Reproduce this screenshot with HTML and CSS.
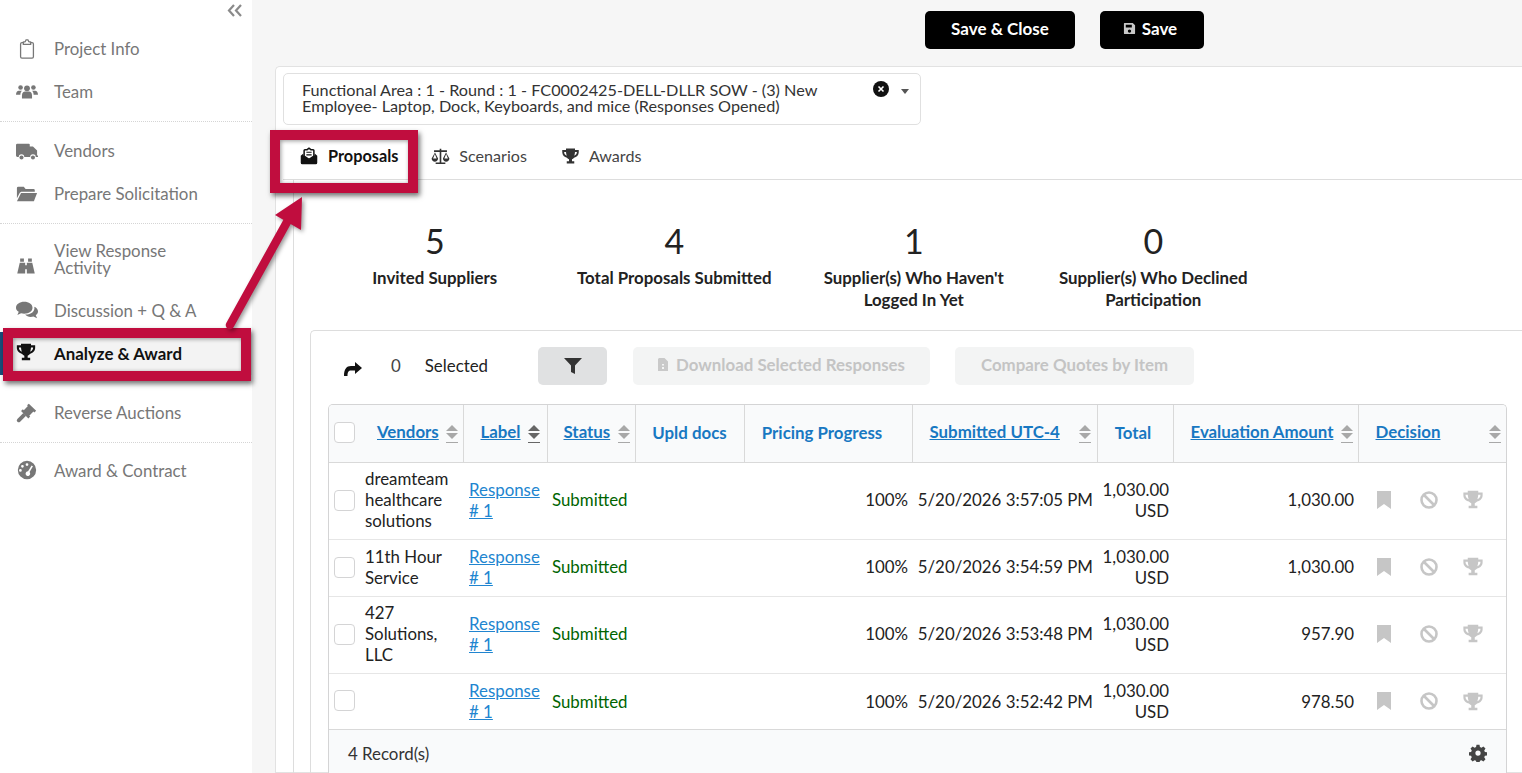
FILE: index.html
```html
<!DOCTYPE html>
<html lang="en">
<head>
<meta charset="utf-8">
<title>Analyze &amp; Award</title>
<link rel="stylesheet" href="styles.css">
</head>
<body>
<div class="page">
  <aside class="sidebar">
    <div class="collapse">
      <svg width="16" height="13" viewBox="0 0 16 13"><path d="M7 1 2 6.500 7 12M14 1 9 6.500 14 12" fill="none" stroke="#8a8a8a" stroke-width="2.200"/></svg>
    </div>
    <nav>
      <div class="nav-group">
        <a class="nav-item"><svg class="nav-icon" viewBox="0 0 24 24"><path d="M8 5h-1.500a1.500 1.500 0 0 0-1.500 1.500v14a1.500 1.500 0 0 0 1.500 1.500h11a1.500 1.500 0 0 0 1.500-1.500v-14a1.500 1.500 0 0 0-1.500-1.500H16M8 7V4.500L10 4l1-2h2l1 2 2 .5V7z" fill="none" stroke="#777" stroke-width="1.400"/></svg><span>Project Info</span></a>
        <a class="nav-item"><svg class="nav-icon" viewBox="0 0 24 24"><circle cx="5" cy="7" r="2.500"/><circle cx="19" cy="7" r="2.500"/><circle cx="12" cy="8" r="3.200"/><path d="M0 15c0-3 1.500-4.500 3-4.500h3.500C5 12 4.800 13.500 4.800 15zM24 15c0-3-1.500-4.500-3-4.500h-3.500c1.500 1.500 1.700 3 1.700 4.500zM6.500 19v-3c0-3 1.500-4.500 3.500-4.500h4c2 0 3.500 1.500 3.500 4.500v3z"/></svg><span>Team</span></a>
      </div>
      <div class="nav-group">
        <a class="nav-item"><svg class="nav-icon" viewBox="0 0 24 24"><path d="M1.500 4h12.500a1 1 0 0 1 1 1v2h3.500l4.500 4.500V17h1v1.500h-2.500a3 3 0 0 0-6 0H9a3 3 0 0 0-6 0H1.500A1.500 1.500 0 0 1 0 17V5.500A1.500 1.500 0 0 1 1.500 4z"/><circle cx="6" cy="19" r="2.200"/><circle cx="18.500" cy="19" r="2.200"/></svg><span>Vendors</span></a>
        <a class="nav-item"><svg class="nav-icon" viewBox="0 0 24 24"><path d="M1 5.500A1.500 1.500 0 0 1 2.500 4h6l2 2.500H19A1.500 1.500 0 0 1 20.500 8v1.500H6.500c-1.200 0-2 .6-2.500 1.500L1 16.500z"/><path d="M5.500 11H23l-3.500 9H1z"/></svg><span>Prepare Solicitation</span></a>
      </div>
      <div class="nav-group">
        <a class="nav-item nav-wrap"><svg class="nav-icon nav-icon-low" viewBox="0 0 24 24"><path d="M5 3h4.500v4H5zM14.500 3H19v4h-4.500zM4.500 8h6.500v3h2V8h6.500l3 13H13v-5h-2v5H1.500z"/></svg><span>View Response<br>Activity</span></a>
        <a class="nav-item"><svg class="nav-icon" viewBox="0 0 24 24"><path d="M9 3c5 0 9 2.700 9 6.500S14 16 9 16c-1.200 0-2.400-.2-3.500-.5L1.500 17.500 3 14C1 12.800 0 11.200 0 9.500 0 5.700 4 3 9 3z"/><path d="M20 8.500c2.500 1 4 2.900 4 5 0 1.600-.9 3-2.500 4L23 21l-4-1.800c-1 .3-2 .3-3 .3-2.500 0-4.700-.9-6-2.500 6 .3 11-3 10-8.500z"/></svg><span>Discussion + Q &amp; A</span></a>
        <a class="nav-item nav-active"><svg class="nav-icon" viewBox="0 0 24 24"><path d="M6 2h12v2h5v3c0 4-3 6.500-6.300 7.300-.8 1-1.700 1.700-2.700 2.100V19h3v3H7v-3h3v-2.600c-1-.4-1.900-1.100-2.700-2.100C4 13.500 1 11 1 7V4h5zM3.500 6.500V7c0 2 1.300 3.700 3.500 4.600-.5-1.500-.9-3.200-1-5.100zm17 0H18c-.1 1.900-.5 3.600-1 5.100 2.200-.9 3.500-2.600 3.500-4.600z"/></svg><span>Analyze &amp; Award</span></a>
        <div class="nav-gap"></div>
        <a class="nav-item"><svg class="nav-icon" viewBox="0 0 24 24"><path d="M14 3l8 7.500-2 2-1-1-4.500 4.500 1 1-2 2-8-8 2-2 1 1L13 5.500l-1-1z"/><path d="M8 13l3 3-6.500 6.500a1.500 1.500 0 0 1-3-3z"/></svg><span>Reverse Auctions</span></a>
      </div>
      <div class="nav-group nav-group-last">
        <a class="nav-item"><svg class="nav-icon" viewBox="0 0 24 24"><path fill-rule="evenodd" d="M12 2a10 10 0 1 1 0 20 10 10 0 0 1 0-20zM12 4.500a1.500 1.500 0 1 0 0 3 1.500 1.500 0 0 0 0-3zM7 6.500a1.500 1.500 0 1 0 0 3 1.500 1.500 0 0 0 0-3zM4.800 11a1.500 1.500 0 1 0 0 3 1.500 1.500 0 0 0 0-3zM17 7l-4 6.500a2.500 2.500 0 1 0 1.800.8L18.500 8z"/></svg><span>Award &amp; Contract</span></a>
      </div>
    </nav>
  </aside>

  <main class="main">
    <header class="actions">
      <button class="btn-black btn-wide">Save &amp; Close</button>
      <button class="btn-black btn-save"><svg width="13" height="13" viewBox="0 0 14 14"><path fill="#c8c8c8" fill-rule="evenodd" d="M1.500 1h9L13 3.500V12a1 1 0 0 1-1 1H2a1 1 0 0 1-1-1V1.500zM3 3v3h6.500V3zM7 8a1.800 1.800 0 1 0 0 3.600A1.800 1.800 0 0 0 7 8z"/></svg>Save</button>
    </header>
    <section class="panel">
      <div class="select">
        <div class="select-text">Functional Area : 1 - Round : 1 - FC0002425-DELL-DLLR SOW - (3) New Employee- Laptop, Dock, Keyboards, and mice (Responses Opened)</div>
        <svg class="select-clear" width="16" height="16" viewBox="0 0 16 16"><circle cx="8" cy="8" r="8" fill="#111"/><path d="m5.500 5.500 5 5m0-5-5 5" stroke="#fff" stroke-width="1.600"/></svg>
        <span class="select-caret"></span>
      </div>
      <div class="tabs">
        <a class="tab tab-active"><svg width="18" height="18" viewBox="0 0 24 24"><path d="M1 11.500 4.500 8.500V11L12 16.500 19.500 11V8.500L23 11.500V21a2 2 0 0 1-2 2H3a2 2 0 0 1-2-2z" fill="#111"/><path d="M5.500 12V4.500a1 1 0 0 1 1-1h3L12 1.500l2.500 2h3a1 1 0 0 1 1 1V12L12 16.500z" fill="#fff" stroke="#111" stroke-width="2"/><path d="M8.500 7h7M8.500 10.500h7" stroke="#111" stroke-width="1.500"/></svg><span>Proposals</span></a>
        <a class="tab tab-scale"><svg width="21" height="18" viewBox="0 0 26 22"><path d="M12 2h2v2h7v2h-1.500L24 14c0 2.500-2 4-4 4s-4-1.500-4-4l4-7.500-.5-.5H14v13h5v2H7v-2h5V6H6.500L6 6.500 10 14c0 2.500-2 4-4 4s-4-1.500-4-4L6.500 6H5V4h7zM6 8.500 3.800 14h4.400zm14 0L17.800 14h4.400z" fill="#333"/></svg><span>Scenarios</span></a>
        <a class="tab"><svg width="19" height="18" viewBox="0 0 24 24"><path fill="#333" d="M6 2h12v2h5v3c0 4-3 6.500-6.300 7.300-.8 1-1.700 1.700-2.700 2.100V19h3v3H7v-3h3v-2.600c-1-.4-1.900-1.100-2.700-2.100C4 13.500 1 11 1 7V4h5zM3.500 6.500V7c0 2 1.300 3.700 3.500 4.600-.5-1.500-.9-3.200-1-5.100zm17 0H18c-.1 1.900-.5 3.600-1 5.100 2.200-.9 3.500-2.600 3.500-4.600z"/></svg><span>Awards</span></a>
      </div>
      <div class="content">
        <div class="stats">
          <div class="stat"><div class="stat-num">5</div><div class="stat-label">Invited Suppliers</div></div>
          <div class="stat"><div class="stat-num">4</div><div class="stat-label">Total Proposals Submitted</div></div>
          <div class="stat"><div class="stat-num">1</div><div class="stat-label">Supplier(s) Who Haven't<br>Logged In Yet</div></div>
          <div class="stat"><div class="stat-num">0</div><div class="stat-label">Supplier(s) Who Declined<br>Participation</div></div>
        </div>
        <div class="card">
          <div class="toolbar">
            <svg class="share" width="18" height="14" viewBox="0 0 18 14"><path d="M11 0l7 6-7 6V8.500H7C4.500 8.500 3.500 10 3.500 14H0C0 7 2.500 4 7 4h4z" fill="#111"/></svg>
            <span class="count">0</span>
            <span class="selected">Selected</span>
            <button class="btn-filter"><svg width="18" height="16" viewBox="0 0 18 16"><path d="M0 0h18l-7 7.500V16l-4-2V7.500z" fill="#333"/></svg></button>
            <button class="btn-off btn-dl"><svg width="10" height="13" viewBox="0 0 10 13"><path d="M1 0h5.500L10 3.500V13H0V1zM4 6v1.500h2V6zm0 3v2h2V9z" fill-rule="evenodd" fill="#c9c9c9"/></svg>Download Selected Responses</button>
            <button class="btn-off btn-cmp">Compare Quotes by Item</button>
          </div>
          <div class="table-wrap">
            <table class="grid">
              <colgroup>
                <col class="c1"><col class="c2"><col class="c3"><col class="c4"><col class="c5"><col class="c6"><col class="c7"><col class="c8"><col class="c9">
              </colgroup>
              <thead>
                <tr>
                  <th class="th-split"><span class="check"></span><a class="sortlink">Vendors</a><span class="sort"></span></th>
                  <th class="th-split th-center"><a class="sortlink">Label</a><span class="sort sort-dark"></span></th>
                  <th class="th-split th-center"><a class="sortlink">Status</a><span class="sort"></span></th>
                  <th class="plain th-c">Upld docs</th>
                  <th class="plain th-c th-pricing">Pricing Progress</th>
                  <th class="th-split th-sub"><a class="sortlink">Submitted UTC-4</a><span class="sort"></span></th>
                  <th class="plain th-c th-total">Total</th>
                  <th class="th-split th-center"><a class="sortlink">Evaluation Amount</a><span class="sort"></span></th>
                  <th class="th-split th-dec"><a class="sortlink">Decision</a><span class="sort"></span></th>
                </tr>
              </thead>
              <tbody>
                <tr class="r-76">
                  <td class="td-vendor"><span class="check"></span><span class="vname">dreamteam healthcare solutions</span></td>
                  <td class="td-link"><a>Response # 1</a></td>
                  <td class="ok">Submitted</td><td></td>
                  <td class="num">100%</td>
                  <td class="num td-date">5/20/2026 3:57:05 PM</td>
                  <td class="num td-total">1,030.00 USD</td>
                  <td class="num">1,030.00</td>
                  <td class="td-icons"><span class="decide"><svg class="d1" viewBox="0 0 14 18"><path d="M0 0h14v18l-7-5-7 5z"/></svg><svg class="d2" viewBox="0 0 18 18"><circle cx="9" cy="9" r="7.500" fill="none" stroke="#c6c6c6" stroke-width="2.600"/><path d="m4 4 10 10" stroke="#c6c6c6" stroke-width="2.600"/></svg><svg class="d3" viewBox="0 0 24 24"><path d="M6 2h12v2h5v3c0 4-3 6.500-6.300 7.300-.8 1-1.700 1.700-2.700 2.100V19h3v3H7v-3h3v-2.600c-1-.4-1.900-1.100-2.700-2.100C4 13.500 1 11 1 7V4h5zM3.500 6.500V7c0 2 1.300 3.700 3.500 4.600-.5-1.500-.9-3.200-1-5.100zm17 0H18c-.1 1.900-.5 3.600-1 5.100 2.200-.9 3.500-2.600 3.500-4.600z"/></svg></span></td>
                </tr>
                <tr class="r-56">
                  <td class="td-vendor"><span class="check"></span><span class="vname">11th Hour Service</span></td>
                  <td class="td-link"><a>Response # 1</a></td>
                  <td class="ok">Submitted</td><td></td>
                  <td class="num">100%</td>
                  <td class="num td-date">5/20/2026 3:54:59 PM</td>
                  <td class="num td-total">1,030.00 USD</td>
                  <td class="num">1,030.00</td>
                  <td class="td-icons"><span class="decide"><svg class="d1" viewBox="0 0 14 18"><path d="M0 0h14v18l-7-5-7 5z"/></svg><svg class="d2" viewBox="0 0 18 18"><circle cx="9" cy="9" r="7.500" fill="none" stroke="#c6c6c6" stroke-width="2.600"/><path d="m4 4 10 10" stroke="#c6c6c6" stroke-width="2.600"/></svg><svg class="d3" viewBox="0 0 24 24"><path d="M6 2h12v2h5v3c0 4-3 6.500-6.300 7.300-.8 1-1.700 1.700-2.700 2.100V19h3v3H7v-3h3v-2.600c-1-.4-1.900-1.100-2.700-2.100C4 13.500 1 11 1 7V4h5zM3.500 6.500V7c0 2 1.300 3.700 3.500 4.600-.5-1.500-.9-3.200-1-5.100zm17 0H18c-.1 1.900-.5 3.600-1 5.100 2.200-.9 3.500-2.600 3.500-4.600z"/></svg></span></td>
                </tr>
                <tr class="r-76">
                  <td class="td-vendor"><span class="check"></span><span class="vname">427 Solutions, LLC</span></td>
                  <td class="td-link"><a>Response # 1</a></td>
                  <td class="ok">Submitted</td><td></td>
                  <td class="num">100%</td>
                  <td class="num td-date">5/20/2026 3:53:48 PM</td>
                  <td class="num td-total">1,030.00 USD</td>
                  <td class="num">957.90</td>
                  <td class="td-icons"><span class="decide"><svg class="d1" viewBox="0 0 14 18"><path d="M0 0h14v18l-7-5-7 5z"/></svg><svg class="d2" viewBox="0 0 18 18"><circle cx="9" cy="9" r="7.500" fill="none" stroke="#c6c6c6" stroke-width="2.600"/><path d="m4 4 10 10" stroke="#c6c6c6" stroke-width="2.600"/></svg><svg class="d3" viewBox="0 0 24 24"><path d="M6 2h12v2h5v3c0 4-3 6.500-6.300 7.300-.8 1-1.700 1.700-2.700 2.100V19h3v3H7v-3h3v-2.600c-1-.4-1.900-1.100-2.700-2.100C4 13.500 1 11 1 7V4h5zM3.500 6.500V7c0 2 1.300 3.700 3.500 4.600-.5-1.500-.9-3.200-1-5.100zm17 0H18c-.1 1.900-.5 3.600-1 5.100 2.200-.9 3.500-2.600 3.500-4.600z"/></svg></span></td>
                </tr>
                <tr class="r-55">
                  <td class="td-vendor"><span class="check"></span><span class="vname"></span></td>
                  <td class="td-link"><a>Response # 1</a></td>
                  <td class="ok">Submitted</td><td></td>
                  <td class="num">100%</td>
                  <td class="num td-date">5/20/2026 3:52:42 PM</td>
                  <td class="num td-total">1,030.00 USD</td>
                  <td class="num">978.50</td>
                  <td class="td-icons"><span class="decide"><svg class="d1" viewBox="0 0 14 18"><path d="M0 0h14v18l-7-5-7 5z"/></svg><svg class="d2" viewBox="0 0 18 18"><circle cx="9" cy="9" r="7.500" fill="none" stroke="#c6c6c6" stroke-width="2.600"/><path d="m4 4 10 10" stroke="#c6c6c6" stroke-width="2.600"/></svg><svg class="d3" viewBox="0 0 24 24"><path d="M6 2h12v2h5v3c0 4-3 6.500-6.300 7.300-.8 1-1.700 1.700-2.700 2.100V19h3v3H7v-3h3v-2.600c-1-.4-1.900-1.100-2.700-2.100C4 13.500 1 11 1 7V4h5zM3.500 6.500V7c0 2 1.300 3.700 3.500 4.600-.5-1.500-.9-3.200-1-5.100zm17 0H18c-.1 1.900-.5 3.600-1 5.100 2.200-.9 3.500-2.600 3.500-4.600z"/></svg></span></td>
                </tr>
              </tbody>
            </table>
            <div class="tfoot">
              <span>4 Record(s)</span>
              <svg width="18" height="18" viewBox="0 0 24 24"><path fill="#444" fill-rule="evenodd" d="M10 1h4l.6 3 2 .9 2.600-1.700 2.800 2.800-1.700 2.600.9 2 3 .6v4l-3 .6-.9 2 1.700 2.600-2.800 2.800-2.600-1.700-2 .9-.6 3h-4l-.6-3-2-.9-2.600 1.700-2.800-2.800 1.700-2.600-.9-2-3-.6v-4l3-.6.9-2-1.700-2.600L4.800 3.200l2.600 1.700 2-.9zM12 8.500a3.500 3.500 0 1 0 0 7 3.500 3.500 0 0 0 0-7z"/></svg>
            </div>
          </div>
        </div>
      </div>
    </section>
  </main>

  <div class="mark mark-nav"></div>
  <div class="mark mark-tab"></div>
  <svg class="arrow" width="110" height="150" viewBox="0 0 110 150"><path d="M15 130 L72 27" stroke="#c00d3e" stroke-width="8.500" stroke-linecap="round" fill="none"/><path d="M87 2 L86 35 L60 20z" fill="#c00d3e"/></svg>
</div>
</body>
</html>
```
FILE: styles.css
```css
* { box-sizing: border-box; }
html, body { margin: 0; height: 100%; overflow: hidden; }
body { font-family: Lato, "Open Sans", sans-serif; font-size: 16.850px; color: #222; background: #f6f6f6; }
button { font-family: inherit; }
.page { position: relative; display: flex; width: 1522px; height: 773px; overflow: hidden; }

.sidebar { width: 252px; flex: none; background: #fff; position: relative; }
.collapse { height: 27px; padding: 4px 9px 0 0; display: flex; justify-content: flex-end; }
.nav-group { border-bottom: 1px dotted #d5d5d5; padding: 7px 0 8px; }
.nav-group:first-child { padding-top: 0; }
.nav-group-last { border-bottom: 0; padding-top: 6px; }
.nav-item { display: flex; align-items: center; height: 43px; padding-left: 16px; color: #777; font-size: 16.850px; line-height: 17px; }
.nav-wrap { height: 57px; margin: -1px 0 1.500px; }
.nav-gap { height: 16px; }
.nav-icon { width: 22px; height: 22px; flex: none; margin-right: 16px; fill: #777; }
.nav-icon-low { margin-top: 15px; width: 20px; margin-right: 18px; }
.nav-active { color: #111; font-weight: 700; background: #f3f3f3; border-left: 3px solid #1b4d7a; padding-left: 13px; }
.nav-active .nav-icon { fill: #111; width: 20px; height: 20px; margin: -3px 18px 0 0; }

.main { flex: 1; min-width: 0; display: flex; flex-direction: column; padding-left: 23px; }
.actions { height: 66px; flex: none; display: flex; align-items: flex-start; padding: 11px 0 0 650px; gap: 25px; }
.btn-black { height: 38px; border: 0; border-radius: 5px; background: #000; color: #fff; font-size: 17px; font-weight: 700; display: flex; align-items: center; justify-content: center; gap: 6px; padding: 0 0 3px; }
.btn-wide { width: 150px; }
.btn-save { width: 104px; padding-right: 4px; }

.panel { flex: 1; background: #fff; border: 1px solid #e2e2e2; border-right: 0; border-radius: 5px 0 0 0; padding: 6px 0 0 7px; min-height: 0; }
.select { width: 638px; height: 52px; border: 1px solid #e0e0e0; border-radius: 5px; position: relative; padding: 8px 90px 0 18px; background: #fff; }
.select-text { font-size: 16.220px; line-height: 16px; color: #333; }
.select-clear { position: absolute; left: 589px; top: 7px; }
.select-caret { position: absolute; left: 617px; top: 15px; border: 4.500px solid transparent; border-top: 5px solid #555; border-bottom: 0; }

.tabs { display: flex; height: 55px; align-items: center; border-bottom: 1px solid #ddd; padding: 7px 0 0 17px; gap: 34px; }
.tab { display: flex; align-items: center; gap: 9px; color: #444; font-size: 16.100px; height: 100%; }
.tab-active { color: #111; font-weight: 700; font-size: 16.300px; gap: 10px; margin-right: -2px; }
.tab-scale { gap: 8px; }

.content { margin-left: 10px; border-left: 1px solid #ddd; padding: 39px 0 0 16px; }
.stats { display: flex; padding-left: 5px; height: 111px; }
.stat { width: 239.500px; flex: none; text-align: center; }
.stat-num { font-size: 34px; line-height: 44px; color: #222; margin-bottom: 4px; }
.stat-label { font-weight: 700; font-size: 16.850px; line-height: 22px; color: #222; }

.card { border: 1px solid #ddd; border-right: 0; border-radius: 5px 0 0 0; padding: 16px 0 0 17px; width: 1240px; }
.toolbar { display: flex; align-items: center; height: 57px; padding-bottom: 19px; }
.share { margin: 6px 0 0 16px; }
.count { margin: 0 0 2px 29px; color: #444; }
.selected { margin: 0 0 2px 24px; color: #222; }
.btn-filter { margin-left: 50px; width: 69px; height: 38px; border: 0; border-radius: 5px; background: #e0e1e2; display: flex; align-items: center; justify-content: center; }
.btn-off { height: 38px; border: 0; border-radius: 5px; background: #f3f4f4; color: #c4c4c4; font-size: 16.850px; font-weight: 700; display: flex; align-items: center; justify-content: center; gap: 8px; padding: 0 0 3px; }
.btn-dl { margin-left: 26px; width: 297px; }
.btn-cmp { margin-left: 25px; width: 239px; }

.table-wrap { width: 1179px; border: 1px solid #d4d4d5; border-bottom: 0; border-radius: 5px 5px 0 0; overflow: hidden; }
.grid { width: 100%; border-collapse: collapse; table-layout: fixed; }
.c1 { width: 134px; } .c2 { width: 84px; } .c3 { width: 88px; } .c4 { width: 109px; } .c5 { width: 168px; }
.c6 { width: 185px; } .c7 { width: 76px; } .c8 { width: 185px; } .c9 { width: 148px; }
.grid th { height: 57px; background: #f9fafb; border-right: 1px solid #d9d9d9; border-bottom: 1px solid #d9d9d9; color: #1878c2; font-size: 16.850px; font-weight: 700; padding: 0; position: relative; }
.grid th:last-child { border-right: 0; }
.th-c { text-align: center; }
.grid th.plain { padding-bottom: 2px; }
.grid th.th-pricing { padding-right: 12px; }
.grid th.th-total { padding-right: 4px; }
.sortlink { color: #1878c2; text-decoration: underline; position: absolute; top: 16px; white-space: nowrap; }
.sort { position: absolute; top: 20px; width: 12px; height: 18px; background: linear-gradient(#a8a8a8,#a8a8a8) 0 16.500px/12px 1.500px no-repeat; }
.sort::before, .sort::after { content: ""; position: absolute; left: 0; border: 6px solid transparent; }
.sort::before { top: 0; border-bottom: 6px solid #a8a8a8; border-top: 0; }
.sort::after { top: 8px; border-top: 6px solid #a8a8a8; border-bottom: 0; }
.sort-dark { background-image: linear-gradient(#666,#666); }
.sort-dark::before { border-bottom-color: #666; }
.sort-dark::after { border-top-color: #666; }
.check { position: absolute; left: 5px; width: 21px; height: 21px; background: #fff; border: 1px solid #d4d4d5; border-radius: 4px; }
th .check { top: 17px; }
th:nth-child(1) .sortlink { left: 48px; }
th:nth-child(1) .sort { left: 117px; }
th:nth-child(2) .sortlink { left: 17px; }
th:nth-child(2) .sort { left: 64px; }
th:nth-child(3) .sortlink { left: 16px; }
th:nth-child(3) .sort { left: 70px; }
th:nth-child(6) .sortlink { left: 17px; }
th:nth-child(6) .sort { left: 166px; }
th:nth-child(8) .sortlink { left: 17px; }
th:nth-child(8) .sort { left: 167px; }
th:nth-child(9) .sortlink { left: 17px; }
th:nth-child(9) .sort { left: 130px; }
.grid td { padding: 0 4px 2px; border-bottom: 1px solid #e6e6e6; font-size: 16.850px; line-height: 21px; color: #222; position: relative; }
.grid tr:last-child td { border-bottom: 1px solid #d9d9d9; padding-bottom: 0; }
.r-76 td { height: 77px; } .r-56 td { height: 57px; } .r-55 td { height: 56px; }
.grid td.td-vendor { padding-left: 36px; }
.td-vendor .check { top: 50%; margin-top: -11px; }
.vname { display: block; }
.grid td.td-link { padding-left: 6px; }
.td-link a { color: #2185d0; text-decoration: underline; }
.grid td.ok { color: #006400; padding-left: 5px; }
.num { text-align: right; }
.td-date { white-space: nowrap; }
.grid td.td-icons { padding: 0 0 2px; }
.decide { display: flex; align-items: center; padding-left: 19px; }
.d1 { width: 14px; height: 18px; fill: #c6c6c6; }
.d2 { width: 18px; height: 18px; margin-left: 29px; }
.d3 { width: 22px; height: 21px; margin-left: 24px; fill: #c6c6c6; }
.tfoot { height: 47px; background: #f9fafb; display: flex; align-items: center; justify-content: space-between; padding: 0 19px; color: #333; }

.mark { position: absolute; border: 10px solid #c00d3e; box-shadow: 2px 3px 5px rgba(0,0,0,.55), inset 1px 1px 4px rgba(0,0,0,.4); }
.mark-nav { left: 3px; top: 328px; width: 248px; height: 53px; }
.mark-tab { left: 270px; top: 130px; width: 148px; height: 63px; }
.arrow { position: absolute; left: 215px; top: 195px; overflow: visible; filter: drop-shadow(2px 2px 2px rgba(0,0,0,.4)); }
```
